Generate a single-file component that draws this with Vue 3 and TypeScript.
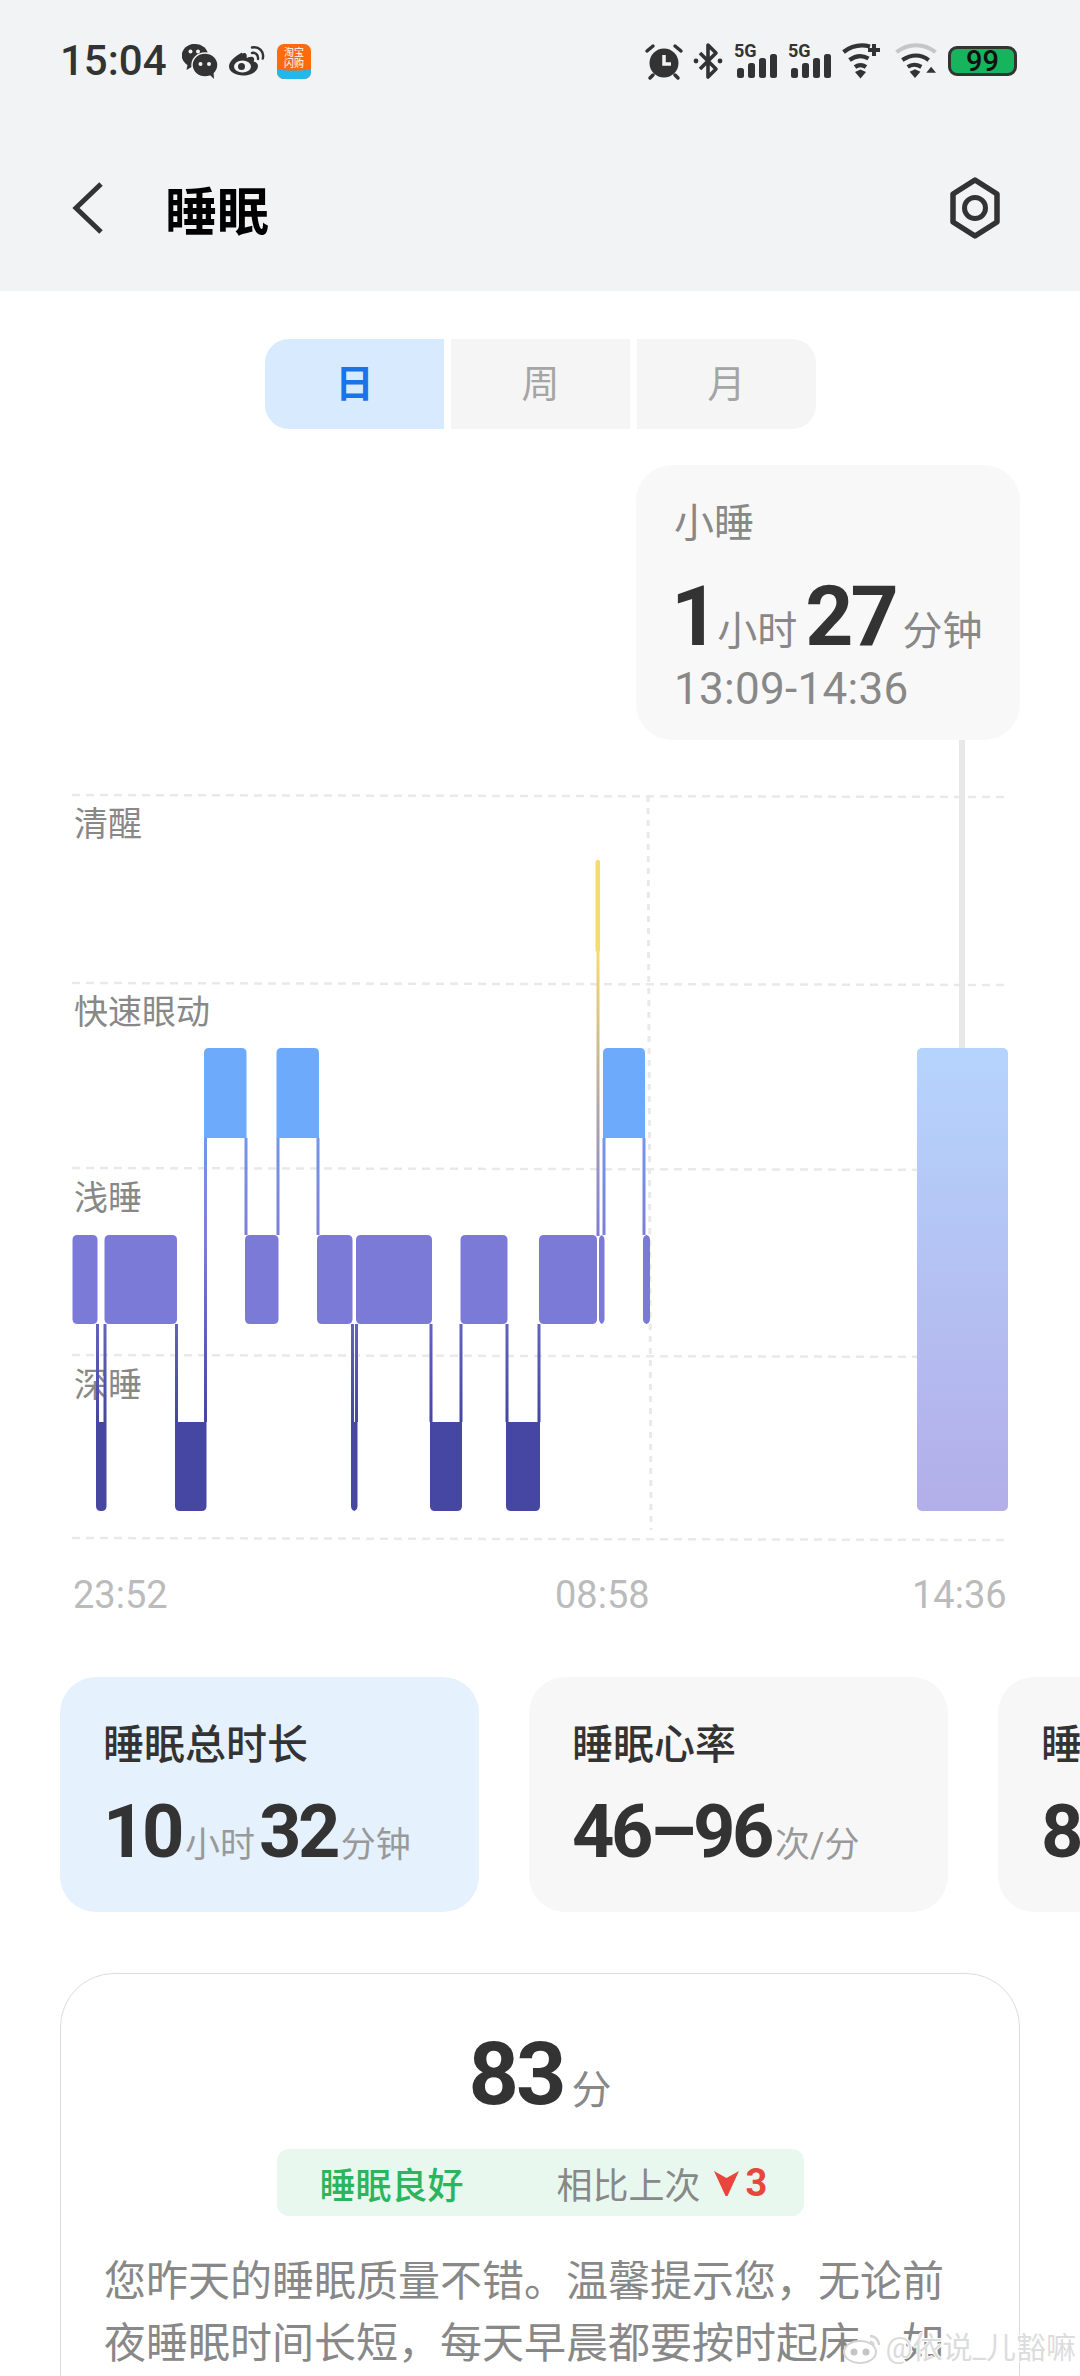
<template>
  <div class="page">
    <header class="head">
      <div class="status">
        <div class="status__left">
          <span class="status__time">15:04</span>
          <svg class="ic ic--wechat" viewBox="0 0 35 35">
            <path d="M13 0C6 0 0 5 0 11.5c0 3.800 2 7 5.500 9.200L4.500 26l5.500-3.200 8-10z" fill="#333" />
            <ellipse cx="13" cy="11.500" rx="13" ry="11.500" fill="#333" />
            <ellipse cx="23" cy="21" rx="13" ry="12" fill="#333" stroke="#f2f3f5" stroke-width="1.500" />
            <path d="M27 30l5 5-.5-7z" fill="#333" />
            <circle cx="8.500" cy="7.500" r="2" fill="#f2f3f5" />
            <circle cx="16" cy="7.500" r="2" fill="#f2f3f5" />
            <circle cx="18.500" cy="20" r="2" fill="#f2f3f5" />
            <circle cx="27" cy="20" r="2" fill="#f2f3f5" />
          </svg>
          <svg class="ic ic--weibo" viewBox="0 0 35 30">
            <path d="M13 6.500C6 10 0 15.500 0 20.500 0 26 7 29.500 14 29.500c8.500 0 15-4.500 15-9.500 0-3-2.500-4-4.300-4.600 1-2.500.5-4.400-2-4.700-2-.2-4.300.8-5.200 1.200.8-2.800-.2-4.400-1.500-4.900-.8-.3-1.900 0-3 .5z" fill="#333" />
            <ellipse cx="13.500" cy="20.500" rx="8.500" ry="6" fill="#f2f3f5" />
            <circle cx="12.500" cy="20.500" r="3.500" fill="#333" />
            <path d="M23 7c3-.8 6.500 1.500 6 6M23 1.500c7-1.500 12.500 4 10.800 11" fill="none" stroke="#333" stroke-width="2.400" stroke-linecap="round" />
          </svg>
          <svg class="ic ic--taobao" viewBox="0 0 34 35">
            <rect width="34" height="35" rx="7" fill="#ff6a0d" />
            <path d="M0 25c8 2 26 2 34 0v3a7 7 0 0 1-7 7H7a7 7 0 0 1-7-7z" fill="#25b6ee" />
            <text x="17" y="12" class="ic__tiny">淘宝</text>
            <text x="17" y="23" class="ic__tiny">闪购</text>
          </svg>
        </div>
        <div class="status__right">
          <svg class="ic ic--alarm" viewBox="0 0 36 36">
            <path d="M1 8l6-5M35 8l-6-5M7 32l-3 3M29 32l3 3" fill="none" stroke="#333" stroke-width="3.500" stroke-linecap="round" />
            <circle cx="18" cy="20" r="14.500" fill="#333" />
            <path d="M18 12v9h7" fill="none" stroke="#f2f3f5" stroke-width="3.500" />
          </svg>
          <svg class="ic ic--bt" viewBox="0 0 30 36">
            <path d="M7 10l16 16-8 8V2l8 8L7 26" fill="none" stroke="#333" stroke-width="3.600" stroke-linejoin="round" />
            <circle cx="3" cy="18" r="2.400" fill="#333" />
            <circle cx="27" cy="18" r="2.400" fill="#333" />
          </svg>
          <svg v-for="n in 2" :key="n" class="ic ic--signal" viewBox="0 0 43 36">
            <text x="0" y="14" class="ic__5g">5G</text>
            <rect x="3" y="25" width="7" height="10" rx="2.500" fill="#333" />
            <rect x="14" y="20" width="7" height="15" rx="2.500" fill="#333" />
            <rect x="25" y="15" width="7" height="20" rx="2.500" fill="#333" />
            <rect x="36" y="11" width="7" height="24" rx="2.500" fill="#333" />
          </svg>
          <svg class="ic ic--wifi" viewBox="0 0 42 36">
            <path d="M1.500 9C10 2.500 20 1.500 28 3.500M7.500 17c6-4.500 13-5 19-1.500M13 24c3.500-2.500 7.500-2.500 11 0" fill="none" stroke="#333" stroke-width="4.200" />
            <path d="M13 29l5.500-2.500L24 29l-5.500 6.500z" fill="#333" />
            <path d="M32 1v12M26 7h12" stroke="#333" stroke-width="4" />
          </svg>
          <svg class="ic ic--wifi" viewBox="0 0 43 36">
            <path d="M1.500 9c12-9.500 28-9.500 40 0" fill="none" stroke="#c6c6c6" stroke-width="4.200" />
            <path d="M7.500 17c9-6 19-6 27 0M13 24c4-2.800 9-2.800 14 0" fill="none" stroke="#333" stroke-width="4.200" />
            <path d="M15 29l5.500-2.500L26 29l-5.500 6.500z" fill="#333" />
            <path d="M32 30l5-6 5 6z" fill="#333" />
          </svg>
          <div class="battery">99</div>
        </div>
      </div>
      <nav class="nav">
        <svg class="nav__back" viewBox="0 0 32 52">
          <path d="M29 2L4 26l25 24" fill="none" stroke="#333" stroke-width="5" />
        </svg>
        <span class="nav__title">睡眠</span>
        <svg class="nav__gear" viewBox="0 0 56 64">
          <path d="M28 4l22 14v28L28 60 6 46V18z" fill="none" stroke="#333" stroke-width="5.500" stroke-linejoin="round" />
          <circle cx="28" cy="32" r="10.500" fill="none" stroke="#333" stroke-width="5" />
        </svg>
      </nav>
    </header>

    <div class="tabs">
      <div
        v-for="(tab, index) in tabs"
        :key="tab"
        class="tabs__item"
        :class="{ 'tabs__item--active': index === 0 }"
      >
        {{ tab }}
      </div>
    </div>

    <section class="chart">
      <div class="nap">
        <div class="nap__label">小睡</div>
        <div class="nap__value">
          <b>1</b><span>小时</span><b>27</b><span>分钟</span>
        </div>
        <div class="nap__time">13:09-14:36</div>
      </div>

      <svg class="chart__plot" viewBox="0 740 1080 830">
        <defs>
          <linearGradient id="link" gradientUnits="userSpaceOnUse" x1="0" y1="1048" x2="0" y2="1511">
            <stop offset="0" stop-color="#6daafb" />
            <stop offset="0.42" stop-color="#7d7dd8" />
            <stop offset="0.8" stop-color="#4646a3" />
          </linearGradient>
          <linearGradient id="wake" gradientUnits="userSpaceOnUse" x1="0" y1="950" x2="0" y2="1235">
            <stop offset="0" stop-color="#f7dc6c" />
            <stop offset="1" stop-color="#7d7dd8" />
          </linearGradient>
          <linearGradient id="napBar" x1="0" y1="0" x2="0" y2="1">
            <stop offset="0" stop-color="#b5d4fd" />
            <stop offset="1" stop-color="#b3aee8" />
          </linearGradient>
        </defs>

        <line
          v-for="y in gridY"
          :key="y"
          x1="72"
          :y1="y"
          x2="1005"
          :y2="y + 2"
          class="chart__grid"
        />
        <line x1="648" y1="796" x2="651" y2="1530" class="chart__grid chart__grid--v" />

        <text v-for="label in stageLabels" :key="label.text" x="74" :y="label.y" class="chart__label">{{ label.text }}</text>

        <line
          v-for="(link, index) in links"
          :key="index"
          :x1="link[0]"
          :y1="link[1]"
          :x2="link[0] + 0.01"
          :y2="link[2]"
          stroke="url(#link)"
          stroke-width="3"
        />
        <rect x="596.500" y="948" width="3" height="288" fill="url(#wake)" />
        <rect x="595.500" y="860" width="4.500" height="92" rx="2" fill="#f7dc6c" />

        <path v-for="(bar, index) in bars" :key="index" :d="barPath(bar)" :fill="colors[bar.stage]" />

        <rect x="959" y="740" width="6" height="310" fill="#e8e8e8" />
        <rect x="917" y="1048" width="91" height="463" rx="5" fill="url(#napBar)" />
      </svg>

      <div class="chart__times">
        <span>23:52</span>
        <span>08:58</span>
        <span>14:36</span>
      </div>
    </section>

    <div class="stats">
      <div
        v-for="(stat, index) in stats"
        :key="stat.title"
        class="stat"
        :class="{ 'stat--active': index === 0 }"
      >
        <div class="stat__title">{{ stat.title }}</div>
        <div class="stat__value">
          <template v-for="part in stat.parts" :key="part.text">
            <b v-if="part.big">{{ part.text }}</b>
            <span v-else>{{ part.text }}</span>
          </template>
        </div>
      </div>
    </div>

    <section class="score">
      <div class="score__value"><b>83</b><span>分</span></div>
      <div class="score__badge">
        <span class="score__good">睡眠良好</span>
        <span class="score__compare">相比上次</span>
        <svg class="score__arrow" viewBox="0 0 25 26">
          <path d="M0 1l12.500 7L25 1 13.500 26h-2z" fill="#e8453c" />
        </svg>
        <span class="score__diff">3</span>
      </div>
      <p class="score__text">您昨天的睡眠质量不错。温馨提示您，无论前夜睡眠时间长短，每天早晨都要按时起床，如果前一晚睡得较晚，可以在午后适当小睡。</p>
    </section>

    <div class="mark">
      <svg class="mark__logo" viewBox="0 0 40 32">
        <ellipse cx="17" cy="20" rx="16" ry="11" fill="#fff" stroke="#d4d4d4" stroke-width="2" />
        <circle cx="11" cy="20" r="3.500" fill="#c4c4c4" />
        <circle cx="23" cy="20" r="3.500" fill="#c4c4c4" />
        <path d="M27 4c5 0 9 4 9 9M27 10c2 0 3.500 1.500 3.500 3.500" fill="none" stroke="#d4d4d4" stroke-width="2.500" />
      </svg>
      <span>@依说_儿豁嘛</span>
    </div>
  </div>
</template>

<script setup lang="ts">
type Stage = 'rem' | 'light' | 'deep';

interface Bar {
  stage: Stage;
  x0: number;
  x1: number;
  top: number;
  bottom: number;
}

interface Part {
  text: string;
  big: boolean;
}

const tabs = ['日', '周', '月'];

const gridY = [795, 983, 1168, 1355, 1538];

const stageLabels = [
  { text: '清醒', y: 836 },
  { text: '快速眼动', y: 1024 },
  { text: '浅睡', y: 1210 },
  { text: '深睡', y: 1397 },
];

const colors: Record<Stage, string> = {
  rem: '#6daafb',
  light: '#7b7bd7',
  deep: '#4646a3',
};

const rows: Record<Stage, [number, number]> = {
  rem: [1048, 1138],
  light: [1235, 1324],
  deep: [1422, 1511],
};

const spans: [Stage, number, number][] = [
  ['light', 72.5, 97.5],
  ['light', 104.5, 177],
  ['light', 245, 278.5],
  ['light', 317, 352.5],
  ['light', 356, 432],
  ['light', 460.5, 507.5],
  ['light', 539, 597],
  ['light', 599, 604.5],
  ['light', 643, 650],
  ['rem', 204, 246.5],
  ['rem', 276.5, 319],
  ['rem', 603, 645],
  ['deep', 96, 106.5],
  ['deep', 175, 206.5],
  ['deep', 351, 357.5],
  ['deep', 430, 462],
  ['deep', 506, 540],
];

const bars: Bar[] = spans.map(([stage, x0, x1]) => ({
  stage,
  x0,
  x1,
  top: stage === 'deep' ? 0 : 5,
  bottom: stage === 'rem' ? 0 : 5,
}));

// x, top, bottom of the thin lines joining one stage to the next
const links: [number, number, number][] = [
  [97.5, 1324, 1422],
  [105, 1324, 1422],
  [176.5, 1324, 1422],
  [205.5, 1138, 1422],
  [246, 1138, 1235],
  [278, 1138, 1235],
  [318, 1138, 1235],
  [352.5, 1324, 1422],
  [356.5, 1324, 1422],
  [431, 1324, 1422],
  [461, 1324, 1422],
  [507, 1324, 1422],
  [539, 1324, 1422],
  [604, 1138, 1235],
  [644, 1138, 1235],
];

const barPath = (bar: Bar) => {
  const [y0, y1] = rows[bar.stage];
  const { x0, x1, top, bottom } = bar;
  return (
    `M${x0} ${y0 + top}Q${x0} ${y0} ${x0 + top} ${y0}H${x1 - top}Q${x1} ${y0} ${x1} ${y0 + top}` +
    `V${y1 - bottom}Q${x1} ${y1} ${x1 - bottom} ${y1}H${x0 + bottom}Q${x0} ${y1} ${x0} ${y1 - bottom}Z`
  );
};

const stats: { title: string; parts: Part[] }[] = [
  {
    title: '睡眠总时长',
    parts: [
      { text: '10', big: true },
      { text: '小时', big: false },
      { text: '32', big: true },
      { text: '分钟', big: false },
    ],
  },
  {
    title: '睡眠心率',
    parts: [
      { text: '46–96', big: true },
      { text: '次/分', big: false },
    ],
  },
  {
    title: '睡眠血氧',
    parts: [{ text: '8', big: true }],
  },
];
</script>

<style>
html,
body {
  margin: 0;
  background: #fff;
}
</style>

<style scoped>
.page {
  position: relative;
  width: 1080px;
  height: 2376px;
  overflow: hidden;
  background: #fff;
  color: #333;
  font-family: Roboto, 'Noto Sans CJK SC', sans-serif;
}

.head {
  height: 291px;
  box-sizing: border-box;
  padding-top: 43px;
  background: #f2f3f5;
}

.status {
  display: flex;
  justify-content: space-between;
  align-items: center;
  height: 36px;
  padding: 0 63px 0 60px;
}

.status__left,
.status__right {
  display: flex;
  align-items: center;
}

.status__right {
  gap: 11px;
}

.status__time {
  width: 105px;
  margin-right: 17px;
  font-size: 42px;
  font-weight: 500;
  line-height: 36px;
}

.ic {
  display: block;
  flex: none;
  overflow: visible;
}

.ic--wechat {
  width: 35px;
  height: 35px;
  margin-right: 12px;
}

.ic--weibo {
  width: 35px;
  height: 30px;
  margin-right: 13px;
}

.ic--taobao {
  width: 34px;
  height: 35px;
}

.ic__tiny {
  fill: #fff;
  font-size: 10px;
  text-anchor: middle;
}

.ic--alarm {
  width: 36px;
  height: 36px;
}

.ic--bt {
  width: 30px;
  height: 36px;
}

.ic--signal {
  width: 43px;
  height: 36px;
}

.ic__5g {
  fill: #333;
  font-size: 18px;
  font-weight: 700;
}

.ic--wifi {
  width: 42px;
  height: 36px;
}

.battery {
  box-sizing: border-box;
  width: 69px;
  height: 30px;
  border: 3px solid #333;
  border-radius: 9px;
  background: #16b45c;
  color: #111;
  font-size: 29px;
  font-weight: 500;
  line-height: 24px;
  text-align: center;
}

.nav {
  display: flex;
  align-items: center;
  height: 100px;
  margin-top: 79px;
  padding: 0 77px 0 72px;
}

.nav__back {
  width: 32px;
  height: 52px;
  margin-right: 61px;
}

.nav__title {
  flex: 1;
  color: #000;
  font-size: 52px;
  font-weight: 700;
}

.nav__gear {
  width: 56px;
  height: 64px;
}

.tabs {
  display: flex;
  gap: 7px;
  width: 551px;
  height: 90px;
  margin: 48px 0 0 265px;
  border-radius: 24px;
  overflow: hidden;
}

.tabs__item {
  flex: 1;
  background: #f5f5f5;
  color: #a5a5a5;
  font-size: 38px;
  line-height: 90px;
  text-align: center;
}

.tabs__item--active {
  background: #d8eafd;
  color: #1a73e8;
  font-weight: 700;
}

.chart {
  margin-top: 36px;
}

.nap {
  box-sizing: border-box;
  width: 384px;
  height: 275px;
  margin-left: 636px;
  padding: 35px 0 0 38px;
  border-radius: 36px;
  background: #f8f8f8;
  color: #888;
}

.nap__label {
  font-size: 40px;
  line-height: 48px;
}

.nap__value {
  display: flex;
  align-items: baseline;
  height: 88px;
  margin: 25px 0 0 -3px;
  font-size: 40px;
  line-height: 88px;
}

.nap__value b {
  color: #333;
  font-size: 84px;
  font-weight: 700;
  letter-spacing: -3px;
}

.nap__value span {
  margin: 0 8px 0 1px;
}

.nap__value span:last-child {
  margin-left: 7px;
}

.nap__time {
  font-size: 44px;
  letter-spacing: 0.3px;
  line-height: 56px;
}

.chart__plot {
  display: block;
  width: 1080px;
  height: 830px;
}

.chart__grid {
  stroke: #e9e9e9;
  stroke-width: 2.5;
  stroke-dasharray: 8 6;
}

.chart__grid--v {
  stroke-width: 3;
  stroke-dasharray: 6 6;
}

.chart__label {
  fill: #888;
  font-size: 34px;
}

.chart__times {
  display: grid;
  grid-template-columns: 482px 357px auto;
  margin-top: 3px;
  padding-left: 73px;
  color: #bbb;
  font-size: 38px;
  line-height: 44px;
}

.stats {
  display: flex;
  gap: 50px;
  margin-top: 60px;
  padding-left: 60px;
  overflow: hidden;
}

.stat {
  flex: none;
  box-sizing: border-box;
  width: 419px;
  height: 235px;
  padding: 42px 0 0 43px;
  border-radius: 36px;
  background: #f7f7f7;
}

.stat--active {
  background: #e6f1fe;
}

.stat__title {
  font-size: 41px;
  font-weight: 500;
  line-height: 52px;
}

.stat__value {
  display: flex;
  align-items: baseline;
  gap: 4px;
  margin-top: 19px;
  line-height: 84px;
}

.stat__value b {
  font-size: 74px;
  font-weight: 700;
  letter-spacing: -3.5px;
}

.stat__value span {
  color: #999;
  font-size: 35px;
}

.score {
  box-sizing: border-box;
  width: 960px;
  height: 700px;
  margin: 61px 0 0 60px;
  padding: 52px 43px 0;
  border: 1.5px solid #dcdcdc;
  border-radius: 54px;
}

.score__value {
  display: flex;
  justify-content: center;
  align-items: baseline;
  gap: 8px;
  line-height: 96px;
}

.score__value b {
  font-size: 88px;
  font-weight: 700;
  letter-spacing: -3px;
}

.score__value span {
  color: #888;
  font-size: 40px;
}

.score__badge {
  display: flex;
  align-items: center;
  box-sizing: border-box;
  width: 527px;
  height: 67px;
  margin: 10px auto 0;
  padding-left: 43px;
  border-radius: 12px;
  background: #e9f8ee;
  font-size: 36px;
}

.score__good {
  margin-right: 93px;
  color: #2db55d;
  font-weight: 500;
}

.score__compare {
  margin-right: 13px;
  color: #888;
}

.score__arrow {
  width: 25px;
  height: 26px;
  margin-right: 7px;
}

.score__diff {
  color: #e8453c;
  font-size: 38px;
  font-weight: 700;
}

.score__text {
  margin: 35px 0 0;
  color: #888;
  font-size: 42px;
  line-height: 62px;
}

.mark {
  position: absolute;
  right: 4px;
  bottom: 11px;
  display: flex;
  align-items: center;
  gap: 3px;
  color: #dcdcdc;
  font-size: 30px;
  line-height: 34px;
  text-shadow: 1px 0 #fff, -1px 0 #fff, 0 1px #fff, 0 -1px #fff;
}

.mark__logo {
  width: 40px;
  height: 32px;
}
</style>
